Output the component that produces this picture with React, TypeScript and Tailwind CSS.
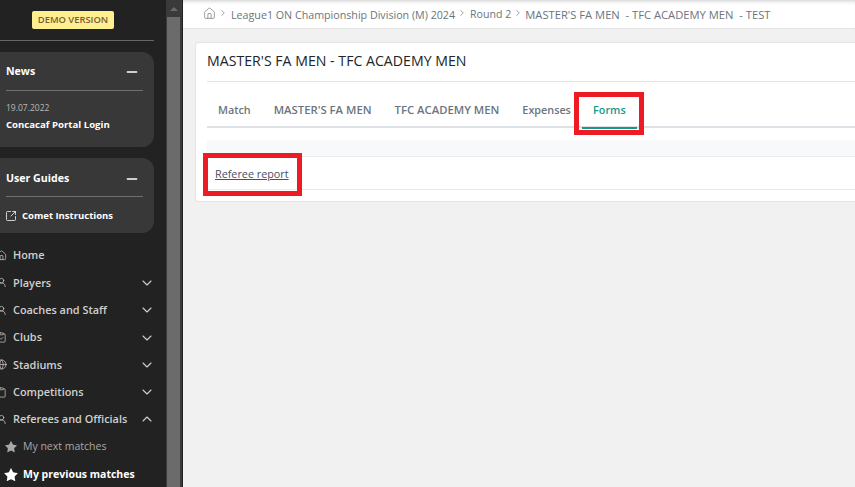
import { ChevronDown, ChevronUp, ChevronRight, Minus, Star, House, UserRound, SquareArrowOutUpRight, Globe, ClipboardCheck, Clipboard } from "lucide-react";

const font = "font-['Open_Sans','Noto_Sans',sans-serif]";

const menu = [
  { label: "Home", icon: House, arrow: false },
  { label: "Players", icon: UserRound, arrow: true },
  { label: "Coaches and Staff", icon: UserRound, arrow: true },
  { label: "Clubs", icon: ClipboardCheck, arrow: true },
  { label: "Stadiums", icon: Globe, arrow: true },
  { label: "Competitions", icon: Clipboard, arrow: true },
];

function CardHeader({ title, className }: { title: string; className: string }) {
  return (
    <div className={`flex h-[39px] items-center justify-between border-b border-[#6f6f6f] ${className}`}>
      <span className="text-[10.6px] font-bold text-white">{title}</span>
      <Minus size={16} strokeWidth={2} className="mr-[3px] text-white" />
    </div>
  );
}

function Sidebar() {
  return (
    <aside className="h-full w-[166px] shrink-0 overflow-hidden bg-[#222222]">
      <div className="flex h-[41px] w-[154px] items-start justify-center border-b border-[#666666] pt-[11px]">
        <span className="ml-[-8px] flex h-[18px] w-[82px] items-center justify-center rounded-[2px] bg-[#fff08f] text-[9.4px] font-semibold text-[#7d5a3c]">
          DEMO VERSION
        </span>
      </div>

      <div className="mt-[11px] ml-[-12px] h-[95px] w-[166px] rounded-[12px] bg-[#383838] pl-[18px] pr-[11px]">
        <CardHeader title="News" className="pt-[1px]" />
        <p className="mt-[10px] text-[8.5px] leading-[14px] text-[#b8b8b8]">19.07.2022</p>
        <p className="mt-[3px] text-[9.6px] font-bold leading-[14px] text-white">Concacaf Portal Login</p>
      </div>

      <div className="mt-[11px] ml-[-12px] h-[75px] w-[166px] rounded-[12px] bg-[#383838] pl-[18px] pr-[11px]">
        <CardHeader title="User Guides" className="pt-[3px]" />
        <div className="mt-[12px] flex items-center gap-[5px]">
          <SquareArrowOutUpRight size={12} strokeWidth={1.5} className="ml-[-1px] text-white" />
          <span className="text-[9.5px] font-bold text-white">Comet Instructions</span>
        </div>
      </div>

      <nav className="mt-[9px]">
        {menu.map((m) => (
          <div key={m.label} className="flex h-[27.3px] items-center justify-between pr-[11px]">
            <div className="flex items-center gap-[6px]">
              <m.icon size={11} strokeWidth={1.5} className="ml-[-4px] text-[#d0d0d0]" />
              <span className="text-[10.9px] font-semibold text-[#d0d0d0]">{m.label}</span>
            </div>
            {m.arrow && <ChevronDown size={16} strokeWidth={1.6} className="text-[#d0d0d0]" />}
          </div>
        ))}
        <div className="flex h-[27.3px] items-center justify-between pr-[11px]">
          <div className="flex items-center gap-[6px]">
            <UserRound size={11} strokeWidth={1.5} className="ml-[-4px] text-[#d0d0d0]" />
            <span className="text-[10.9px] font-semibold text-[#d0d0d0]">Referees and Officials</span>
          </div>
          <ChevronUp size={16} strokeWidth={1.6} className="text-[#d0d0d0]" />
        </div>
        <div className="flex h-[27.3px] items-center gap-[5px] pl-[4px] pt-[1px]">
          <Star size={14} fill="#a8a8a8" strokeWidth={0} />
          <span className="text-[10.5px] text-[#a8a8a8]">My next matches</span>
        </div>
        <div className="flex h-[27.3px] items-center gap-[4px] pl-[3px] pt-[1px]">
          <Star size={16} fill="#ffffff" strokeWidth={0} />
          <span className="text-[10.5px] font-bold text-white">My previous matches</span>
        </div>
      </nav>
    </aside>
  );
}

function Scrollbar() {
  return (
    <div className="flex h-full w-[17px] shrink-0 flex-col border-r border-[#222222] bg-[#3a3a3a]">
      <div className="flex h-[17px] w-[14px] items-center justify-center pl-[1px]">
        <div className="h-0 w-0 border-x-[4px] border-b-[4px] border-x-transparent border-b-[#6b6b6b]" />
      </div>
      <div className="ml-[1px] w-[13px] flex-1 bg-[#6b6b6b]" />
    </div>
  );
}

function Breadcrumb() {
  return (
    <div className="flex h-[29px] items-center border-b border-[#e4e4e4] bg-white pl-[20px] pt-[2px] text-[#6c757d] shadow-[inset_0_4px_4px_-3px_rgba(0,0,0,0.2)]">
      <House size={13} strokeWidth={1.25} className="mb-[3px] mr-[2px]" />
      <ChevronRight size={10} strokeWidth={1.6} className="mb-[5px] mr-[3px]" />
      <span className="text-[10.7px]">League1 ON Championship Division (M) 2024</span>
      <ChevronRight size={10} strokeWidth={1.6} className="mx-[1px] mb-[5px] ml-[2px]" />
      <span className="ml-[2px] text-[10.6px]">Round 2</span>
      <ChevronRight size={10} strokeWidth={1.6} className="mx-[2px] mb-[5px]" />
      <span className="whitespace-pre text-[11.2px]">MASTER'S FA MEN  - TFC ACADEMY MEN  - TEST</span>
    </div>
  );
}

function MatchCard() {
  return (
    <div className="ml-[12px] mt-[13px] h-[160px] rounded-l-[4px] border border-r-0 border-[#e4e4e4] bg-white pl-[11px]">
      <div className="flex h-[39px] items-center border-b border-[#e4e4e4] pb-[2px] text-[14.15px] text-[#212529]">
        <h1 className="font-medium">MASTER'S FA MEN - TFC ACADEMY MEN</h1>
      </div>
      <div className="flex h-[46px] items-center border-b-2 border-[#dee2e6] pl-[11px] pt-[12px] text-[10.8px] font-semibold text-[#6c757d]">
        <span className="mr-[23px]">Match</span>
        <span className="mr-[23px] text-[11.3px]">MASTER'S FA MEN</span>
        <span className="mr-[23px] text-[11.3px]">TFC ACADEMY MEN</span>
        <span className="mr-[11px]">Expenses</span>
        <span className="relative mt-[-12px] flex h-[46px] w-[55px] items-center justify-center pt-[12px] text-[#139a8b]">
          Forms
          <span className="absolute bottom-[-2px] left-0 h-[2px] w-full bg-[#139a8b]" />
        </span>
      </div>
      <div className="mt-[12px] h-[17px] border-b border-[#e9ecef] bg-[#f8f9fa]" />
      <div className="flex h-[33px] items-center border-b border-[#e9ecef] pl-[8px] pt-[2px] text-[10.8px] text-[#495067]">
        <a className="underline">Referee report</a>
      </div>
    </div>
  );
}

export default function App() {
  return (
    <div className={`relative flex h-[487px] w-[855px] overflow-hidden ${font}`}>
      <Sidebar />
      <Scrollbar />
      <main className="h-full flex-1 bg-[#f1f1f1]">
        <Breadcrumb />
        <MatchCard />
      </main>
      {/* red annotations drawn on top of the screenshot */}
      <div className="absolute left-[574px] top-[92px] h-[43px] w-[70px] border-[5px] border-[#ed1c24]" />
      <div className="absolute left-[203px] top-[153px] h-[43px] w-[99px] border-[5px] border-[#ed1c24]" />
    </div>
  );
}
